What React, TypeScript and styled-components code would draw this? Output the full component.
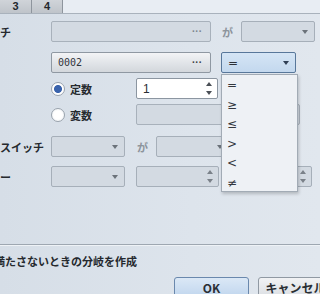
import styled, { createGlobalStyle, css } from "styled-components";

const Global = createGlobalStyle`
  html, body {
    margin: 0;
    padding: 0;
    background: #dae2ea;
    overflow: hidden;
  }
  body {
    font-family: "Noto Sans CJK JP", "Noto Sans", sans-serif;
    color: #2b2f35;
  }
`;

const Page = styled.div`
  width: 320px;
  height: 294px;
  overflow: hidden;
  display: flex;
  flex-direction: column;
  background: linear-gradient(90deg, #d6dee7 0%, #dde4ec 60%, #e1e7ee 100%);
`;

const TabBar = styled.div`
  height: 13px;
  display: flex;
  background: #e8edf3;
  border-bottom: 1px solid #a9b2bc;
  flex-shrink: 0;
`;

const Tab = styled.div<{ $w: number }>`
  width: ${(p) => p.$w}px;
  height: 13px;
  background: linear-gradient(#d0d4d9, #bfc4ca);
  border-right: 1px solid #8e959d;
  font: bold 11px/13px "Liberation Sans", sans-serif;
  text-align: center;
  color: #23272c;
`;

const Form = styled.div`
  display: flex;
  flex-direction: column;
  flex-shrink: 0;
`;

const Row = styled.div<{ $gap: number }>`
  display: flex;
  align-items: center;
  height: 21px;
  margin-top: ${(p) => p.$gap}px;
`;

// labels start off-screen to the left, as in the cropped dialog
const Label = styled.div`
  width: 84px;
  margin-left: -33px;
  flex-shrink: 0;
  font-size: 11px;
  font-weight: bold;
  white-space: nowrap;
  color: #25292e;
`;

const Spacer = styled.div<{ $w: number }>`
  width: ${(p) => p.$w}px;
  flex-shrink: 0;
`;

const Ga = styled.div<{ $w: number }>`
  width: ${(p) => p.$w}px;
  flex-shrink: 0;
  font-size: 11px;
  font-weight: bold;
  color: #8d949c;
  box-sizing: border-box;
  padding-left: 1px;
`;

const boxBase = css`
  box-sizing: border-box;
  height: 21px;
  border-radius: 2px;
  display: flex;
  align-items: center;
  flex-shrink: 0;
  position: relative;
`;

const RefField = styled.div<{ $w: number; $disabled?: boolean }>`
  ${boxBase};
  width: ${(p) => p.$w}px;
  padding: 0 8px 0 6px;
  border: 1px solid ${(p) => (p.$disabled ? "#a8b1bb" : "#8f98a2")};
  background: ${(p) =>
    p.$disabled
      ? "#d3dae2"
      : "linear-gradient(#f3f4f6 0%, #e2e5e9 50%, #d3d7dc 100%)"};
  justify-content: space-between;
`;

const Mono = styled.span`
  font: 10px "DejaVu Sans Mono", monospace;
  color: #30343a;
`;

const Dots = styled.span<{ $dim?: boolean }>`
  font: bold 10px "Liberation Sans", sans-serif;
  color: ${(p) => (p.$dim ? "#7c848d" : "#3a3e44")};
  margin-left: auto;
`;

const Select = styled.div<{ $w: number; $focus?: boolean }>`
  ${boxBase};
  width: ${(p) => p.$w}px;
  padding: 0 6px;
  border: 1px solid ${(p) => (p.$focus ? "#58779a" : "#a6afb9")};
  background: ${(p) =>
    p.$focus ? "linear-gradient(#d5e5f5, #c3d8ee)" : "#d3dae2"};
  justify-content: space-between;
`;

const SelectText = styled.span`
  font: 12px "DejaVu Sans", sans-serif;
  color: #2d3137;
`;

const Arrow = styled.svg`
  width: 6px;
  height: 4px;
  margin-left: auto;
`;

const Spin = styled.div<{ $w: number; $white?: boolean }>`
  ${boxBase};
  width: ${(p) => p.$w}px;
  padding: 0 5px 0 6px;
  border: 1px solid ${(p) => (p.$white ? "#8c96a1" : "#a6afb9")};
  background: ${(p) => (p.$white ? "#ffffff" : "#d3dae2")};
`;

const SpinText = styled.span`
  font: 12px "Liberation Sans", sans-serif;
  color: #2a2e34;
`;

const SpinArrows = styled.svg`
  width: 6px;
  height: 13px;
  margin-left: auto;
`;

const Radio = styled.div`
  width: 85px;
  flex-shrink: 0;
  display: flex;
  align-items: center;
  gap: 5px;
  font-size: 11px;
  font-weight: bold;
  color: #25292e;
`;

const RadioDot = styled.span<{ $on?: boolean }>`
  box-sizing: border-box;
  width: 14px;
  height: 14px;
  border-radius: 50%;
  border: 1px solid #9aa3ad;
  background: ${(p) =>
    p.$on
      ? "radial-gradient(circle, #3a63ac 0 3.6px, #ffffff 4.4px)"
      : "radial-gradient(circle, #ffffff 0 4px, #eef1f4 7px)"};
`;

const DropWrap = styled.div`
  position: relative;
  flex-shrink: 0;
`;

const List = styled.div`
  position: absolute;
  top: 22px;
  left: 0;
  width: 77px;
  height: 118px;
  box-sizing: border-box;
  background: #eef1f5;
  border: 1px solid #a2abb5;
  box-shadow: 1px 2px 3px rgba(0, 0, 0, 0.2);
  padding-top: 1px;
  z-index: 2;
`;

const Item = styled.div`
  height: 19.6px;
  padding-left: 5px;
  font: 12px/19.6px "DejaVu Sans", sans-serif;
  color: #33373d;
`;

const Separator = styled.div`
  margin-top: 57px;
  height: 1px;
  background: #9ea7b1;
  border-bottom: 1px solid #eef2f6;
  flex-shrink: 0;
`;

const Check = styled.div`
  margin: 8px 0 0 -39px;
  font-size: 11px;
  font-weight: bold;
  white-space: nowrap;
  color: #25292e;
  height: 15px;
  line-height: 15px;
`;

const Buttons = styled.div`
  display: flex;
  gap: 9px;
  margin: 8px 0 0 174px;
`;

const Button = styled.div<{ $primary?: boolean; $w: number }>`
  box-sizing: border-box;
  width: ${(p) => p.$w}px;
  height: 24px;
  flex-shrink: 0;
  border-radius: 3px;
  border: 1px solid ${(p) => (p.$primary ? "#6a88ad" : "#9099a3")};
  background: ${(p) =>
    p.$primary
      ? "linear-gradient(#dbe8f6, #bcd3ec)"
      : "linear-gradient(#f1f2f4, #d8dce1)"};
  font-size: 12px;
  font-weight: bold;
  text-align: center;
  line-height: 20px;
  color: #2a2e34;
  white-space: nowrap;
`;

const DownArrow = ({ c = "#3c4047" }: { c?: string }) => (
  <Arrow viewBox="0 0 6 4">
    <path d="M0 0H6L3 4Z" fill={c} />
  </Arrow>
);

const UpDown = ({ c = "#4a4f56" }: { c?: string }) => (
  <SpinArrows viewBox="0 0 6 13">
    <path d="M0 4L3 0L6 4Z M0 9H6L3 13Z" fill={c} />
  </SpinArrows>
);

const ops = ["=", "≥", "≤", ">", "<", "≠"];

export default function App() {
  return (
    <Page>
      <Global />
      <TabBar>
        <Tab $w={31}>3</Tab>
        <Tab $w={30}>4</Tab>
      </TabBar>
      <Form>
        <Row $gap={7}>
          <Label>スイッチ</Label>
          <RefField $w={160} $disabled>
            <Dots $dim>···</Dots>
          </RefField>
          <Spacer $w={10} />
          <Ga $w={20}>が</Ga>
          <Select $w={74}>
            <DownArrow c="#6b727a" />
          </Select>
        </Row>
        <Row $gap={10}>
          <Label>変数</Label>
          <RefField $w={160}>
            <Mono>0002</Mono>
            <Dots>···</Dots>
          </RefField>
          <Spacer $w={10} />
          <DropWrap>
            <Select $w={75} $focus>
              <SelectText>=</SelectText>
              <DownArrow c="#2f3f55" />
            </Select>
            <List>
              {ops.map((o) => (
                <Item key={o}>{o}</Item>
              ))}
            </List>
          </DropWrap>
        </Row>
        <Row $gap={5}>
          <Spacer $w={51} />
          <Radio>
            <RadioDot $on />
            定数
          </Radio>
          <Spin $w={82} $white>
            <SpinText>1</SpinText>
            <UpDown />
          </Spin>
        </Row>
        <Row $gap={5}>
          <Spacer $w={51} />
          <Radio>
            <RadioDot />
            変数
          </Radio>
          <RefField $w={164} $disabled />
        </Row>
        <Row $gap={11}>
          <Label>セルフスイッチ</Label>
          <Select $w={74}>
            <DownArrow c="#6b727a" />
          </Select>
          <Spacer $w={11} />
          <Ga $w={20}>が</Ga>
          <Select $w={74}>
            <DownArrow c="#6b727a" />
          </Select>
        </Row>
        <Row $gap={9}>
          <Label>タイマー</Label>
          <Select $w={74}>
            <DownArrow c="#6b727a" />
          </Select>
          <Spacer $w={11} />
          <Spin $w={83}>
            <UpDown c="#7a8189" />
          </Spin>
          <Spacer $w={12} />
          <Spin $w={81}>
            <UpDown c="#7a8189" />
          </Spin>
        </Row>
      </Form>
      <Separator />
      <Check>条件を満たさないときの分岐を作成</Check>
      <Buttons>
        <Button $primary $w={75}>OK</Button>
        <Button $w={75}>キャンセル</Button>
      </Buttons>
    </Page>
  );
}
